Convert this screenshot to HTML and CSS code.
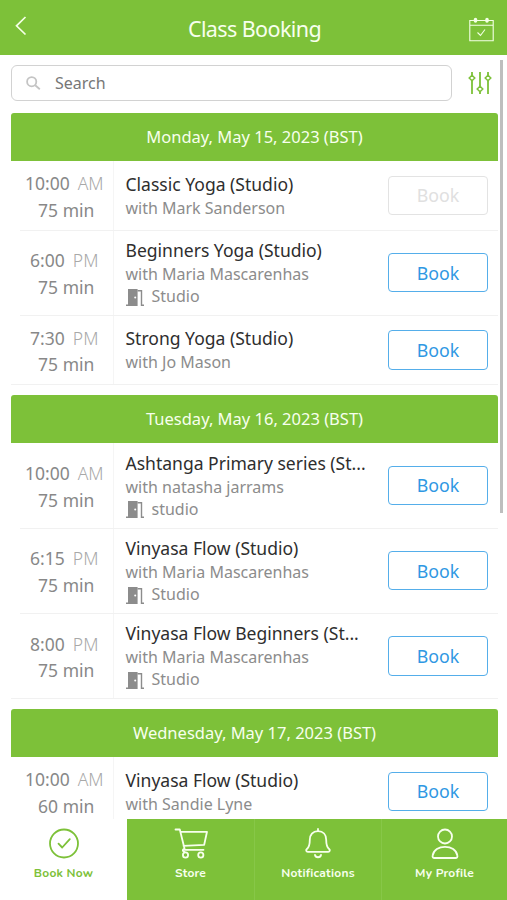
FILE: index.html
```html
<!DOCTYPE html>
<html lang="en">
<head>
<meta charset="utf-8">
<title>Class Booking</title>
<link rel="stylesheet" href="styles.css">
</head>
<body>
<svg class="defs" width="0" height="0" aria-hidden="true">
  <symbol id="door" viewBox="0 0 18 17"><path fill="#8c8c8c" d="M2 0h9.600v17H0v-1.400h2z"/><path fill="none" stroke="#8c8c8c" stroke-width="1.400" d="M11.500 1.700h4v14.500H18"/><circle cx="9.200" cy="8.500" r="1" fill="#fff"/></symbol>
</svg>
<div class="app">
  <header class="topbar">
    <svg class="back" width="12" height="20" viewBox="0 0 12 20"><path d="M10.500 1 1.500 9.800 10.500 18.500"/></svg>
    <h1 class="topbar-title">Class Booking</h1>
    <svg class="calendar" width="25" height="25" viewBox="0 0 25 25"><path d="M.8 3.500h23.400v20.300H.8zM.8 8.200h23.400M8.500 15.500l3 3 4.500-6"/><path class="rings" d="M6.500 2.600v1.400M18 2.600v1.400"/></svg>
  </header>

  <main class="content">
    <div class="search-row">
      <div class="search">
        <svg width="15" height="15" viewBox="0 0 15 15"><circle cx="5.700" cy="5.700" r="4.600"/><path d="M9.200 9.200 13.800 13.200"/></svg>
        <span class="search-label">Search</span>
      </div>
      <svg class="filter" width="24" height="24" viewBox="0 0 24 24"><path d="M4 1v3.500M4 10v13M12 1v14.200M12 20.800V23M20 1v3.500M20 10v13"/><path class="knob" d="M4 4.200 6.800 7 4 9.800 1.200 7zM12 15.200l2.800 2.800-2.800 2.800L9.200 18zM20 4.200 22.800 7 20 9.800 17.200 7z"/></svg>
    </div>

    <section class="day">
      <h2 class="day-title">Monday, May 15, 2023 (BST)</h2>
      <div class="class-row">
        <div class="when"><span class="time">10:00<i class="ampm">AM</i></span><span class="length">75 min</span></div>
        <div class="info"><div class="name">Classic Yoga (Studio)</div><div class="teacher">with Mark Sanderson</div></div>
        <button class="book disabled">Book</button>
      </div>
      <div class="class-row tall">
        <div class="when"><span class="time">6:00<i class="ampm">PM</i></span><span class="length">75 min</span></div>
        <div class="info"><div class="name">Beginners Yoga (Studio)</div><div class="teacher">with Maria Mascarenhas</div><div class="room"><svg class="door"><use href="#door"/></svg>Studio</div></div>
        <button class="book">Book</button>
      </div>
      <div class="class-row">
        <div class="when"><span class="time">7:30<i class="ampm">PM</i></span><span class="length">75 min</span></div>
        <div class="info"><div class="name">Strong Yoga (Studio)</div><div class="teacher">with Jo Mason</div></div>
        <button class="book">Book</button>
      </div>
    </section>

    <section class="day">
      <h2 class="day-title">Tuesday, May 16, 2023 (BST)</h2>
      <div class="class-row tall">
        <div class="when"><span class="time">10:00<i class="ampm">AM</i></span><span class="length">75 min</span></div>
        <div class="info"><div class="name">Ashtanga Primary series (St...</div><div class="teacher">with natasha jarrams</div><div class="room"><svg class="door"><use href="#door"/></svg>studio</div></div>
        <button class="book">Book</button>
      </div>
      <div class="class-row tall">
        <div class="when"><span class="time">6:15<i class="ampm">PM</i></span><span class="length">75 min</span></div>
        <div class="info"><div class="name">Vinyasa Flow (Studio)</div><div class="teacher">with Maria Mascarenhas</div><div class="room"><svg class="door"><use href="#door"/></svg>Studio</div></div>
        <button class="book">Book</button>
      </div>
      <div class="class-row tall">
        <div class="when"><span class="time">8:00<i class="ampm">PM</i></span><span class="length">75 min</span></div>
        <div class="info"><div class="name">Vinyasa Flow Beginners (St...</div><div class="teacher">with Maria Mascarenhas</div><div class="room"><svg class="door"><use href="#door"/></svg>Studio</div></div>
        <button class="book">Book</button>
      </div>
    </section>

    <section class="day">
      <h2 class="day-title">Wednesday, May 17, 2023 (BST)</h2>
      <div class="class-row">
        <div class="when"><span class="time">10:00<i class="ampm">AM</i></span><span class="length">60 min</span></div>
        <div class="info"><div class="name">Vinyasa Flow (Studio)</div><div class="teacher">with Sandie Lyne</div></div>
        <button class="book">Book</button>
      </div>
    </section>
    <div class="scrollbar"></div>
  </main>

  <nav class="tabs">
    <a class="tab active"><svg width="34" height="32" viewBox="0 0 34 32"><circle cx="17" cy="15.500" r="14"/><path d="m11.500 15.700 3.700 3.800 7.600-8.300"/></svg>Book Now</a>
    <a class="tab"><svg width="34" height="32" viewBox="0 0 34 32"><path d="M1.500 1.500h4.300l4.700 19M7 3.800h26l-2.800 13L9.500 17.800M10.500 20.500c-2.600 1-2 3.300 0 3.300M10.500 21.800H29.500"/><circle cx="11.500" cy="27" r="2.600"/><circle cx="26.800" cy="27" r="2.600"/></svg>Store</a>
    <a class="tab"><svg width="34" height="32" viewBox="0 0 34 32"><path d="M17 1v2.200M17 3.200c-5.300 0-8.200 3.600-8.200 8.500 0 5-.7 7.600-2.900 9.300-1.300 1.200-.8 2.800.9 2.800h20.400c1.700 0 2.200-1.600.9-2.800-2.200-1.700-2.900-4.300-2.900-9.300 0-4.900-2.900-8.500-8.200-8.500zM14 27c.5 3 5.500 3 6 0"/></svg>Notifications</a>
    <a class="tab"><svg width="34" height="32" viewBox="0 0 34 32"><circle cx="17" cy="8.500" r="7"/><path d="M6.500 30c-1.500 0-2.200-.9-1.900-2.300C5.600 22 10.800 18.800 17 18.800s11.400 3.200 12.400 8.900c.3 1.400-.4 2.300-1.900 2.300z"/></svg>My Profile</a>
  </nav>
</div>
</body>
</html>
```
FILE: styles.css
```css
* { box-sizing: border-box; }
body { margin: 0; background: #fff; font-family: "Noto Sans", "Open Sans", sans-serif; }
.defs { position: absolute; }
.app { width: 507px; height: 900px; display: flex; flex-direction: column; overflow: hidden; }

.topbar { height: 55px; flex: none; background: #7dc139; display: grid; grid-template-columns: 40px 1fr 40px; align-items: center; padding: 0 13px 0 15px; }
.topbar svg { fill: none; stroke: #f4ffe6; }
.back { stroke-width: 1.7; margin-top: -4px; }
.topbar-title { margin: 2px 0 0; text-align: center; color: #f7ffed; font-weight: 400; font-size: 21.500px; letter-spacing: -.6px; line-height: 30px; }
.calendar { justify-self: end; margin-top: 3px; stroke-width: 1.1; }
.calendar .rings { stroke-width: 3.500; stroke-linecap: round; }

.content { position: relative; flex: 1; min-height: 0; overflow: hidden; padding: 10px 9px 0 11px; }
.search-row { display: flex; align-items: center; justify-content: space-between; height: 36px; margin-bottom: 12px; padding-right: 6px; }
.search { width: 441px; height: 36px; border: 1px solid #d2d2d2; border-radius: 6px; display: flex; align-items: center; gap: 14px; padding-left: 14px; }
.search svg { fill: none; stroke: #c4c4c4; stroke-width: 1.8; }
.search-label { font-size: 16px; color: #777; }
.filter { fill: none; stroke: #7dc139; stroke-width: 1.8; }
.filter .knob { stroke-width: 1.500; }
.scrollbar { position: absolute; right: 4px; top: 5px; width: 3px; height: 453px; background: #bebebe; }

.day { margin-bottom: 10px; }
.day-title { margin: 0; height: 48.400px; border-radius: 3px 3px 0 0; background: #7dc139; color: #f7ffed; text-align: center; font-weight: 400; font-size: 16.500px; line-height: 48px; }
.class-row { height: 69.200px; margin-left: 9px; border-bottom: 1px solid #f1f1f1; display: grid; grid-template-columns: 93.500px 1fr 100px; align-items: center; padding-right: 10px; }
.class-row.tall { height: 85.200px; }
.class-row:last-child { margin-left: 0; padding-left: 9px; }
.when { height: 100%; border-right: 1px solid #f5f5f5; display: flex; flex-direction: column; justify-content: center; text-align: center; padding-top: 3px; color: #888; font-size: 17.500px; line-height: 26.700px; }
.time { display: block; padding-right: 4px; }
.length { display: block; }
.ampm { font-style: normal; font-weight: 300; color: #a8a8a8; margin-left: 8px; }
.info { padding-left: 12px; white-space: nowrap; }
.name { font-size: 17.550px; line-height: 25px; color: #2e2e2e; }
.teacher, .room { font-size: 16px; line-height: 22px; color: #8c8c8c; }
.room { display: flex; align-items: center; gap: 8px; }
.door { width: 18px; height: 17px; margin-top: 2px; }
.book { height: 39.500px; border: 1px solid #55aeea; border-radius: 4px; background: #fff; color: #2f98e3; font: 400 17.800px/36px "Noto Sans", sans-serif; padding: 0; }
.book.disabled { border-color: #e3e3e3; color: #e0e0e0; }

.tabs { height: 81.500px; flex: none; display: grid; grid-template-columns: 127px 127px 127px 126px; background: #7dc139; }
.tab { display: flex; flex-direction: column; align-items: center; padding-top: 9px; color: #f7ffed; font: 700 12px/18px Nunito, "Open Sans", sans-serif; gap: 4px; letter-spacing: .2px; }
.tab + .tab + .tab { border-left: 1px solid #87c748; }
.tab svg { fill: none; stroke: #f7ffed; stroke-width: 1.800; stroke-linecap: round; stroke-linejoin: round; }
.tab.active { background: #fff; color: #7dc139; }
.tab.active svg { stroke: #7dc139; }
```
